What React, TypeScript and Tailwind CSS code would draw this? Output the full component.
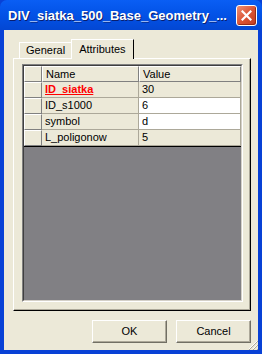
import React from 'react';

const rows = [
  { name: 'ID_siatka', value: '30', key: true, white: false },
  { name: 'ID_s1000', value: '6', key: false, white: true },
  { name: 'symbol', value: 'd', key: false, white: true },
  { name: 'L_poligonow', value: '5', key: false, white: false },
];

const font = "font-['Liberation_Sans',Arial,sans-serif]";

const CloseButton = () => (
  <div className="w-[21px] h-[21px] rounded-[3px] border border-white bg-gradient-to-br from-[#ec8f74] via-[#dc5535] to-[#c23c20] flex items-center justify-center shadow-[inset_-1px_-1px_0_#9a2c16]">
    <svg width="11" height="11" viewBox="0 0 11 11">
      <path d="M1.5 1.5 L9.5 9.5 M9.5 1.5 L1.5 9.5" stroke="white" strokeWidth="2.2" strokeLinecap="square" />
    </svg>
  </div>
);

const Grip = () => (
  <svg width="11" height="11" viewBox="0 0 11 11" className="absolute right-0 bottom-0">
    <path d="M10 2 L2 10 M10 6 L6 10 M10 10 L10 10" stroke="#ffffff" strokeWidth="1" />
    <path d="M11 2 L2 11 M11 6 L6 11 M11 10 L10 11" stroke="#aca899" strokeWidth="1" />
  </svg>
);

const ClassicButton = ({ label }: { label: string }) => (
  <button className="w-[75px] h-[23px] border-t border-l border-white border-r border-b border-r-[#716f64] border-b-[#716f64] bg-[#ece9d8] text-[11px] text-black shadow-[inset_-1px_-1px_0_#aca899]">
    {label}
  </button>
);

export default function App() {
  return (
    <div className={`w-[262px] h-[354px] bg-[#0841d6] flex flex-col ${font}`}>
      {/* title bar */}
      <div className="h-[30px] shrink-0 rounded-t-[7px] bg-gradient-to-b from-[#0a5ef4] via-[#0352e6] to-[#0347d3] flex items-center justify-between pl-[8px] pr-[5px]">
        <span className="text-white font-bold text-[13px] leading-none [text-shadow:1px_1px_0_#0a1e6e]">
          DIV_siatka_500_Base_Geometry_...
        </span>
        <CloseButton />
      </div>

      {/* body */}
      <div className="relative flex-1 mx-[4px] mb-[4px] bg-[#ece9d8] flex flex-col pl-[9px] pr-[7px] pt-[9px] pb-[7px]">
        {/* tabs */}
        <div className="flex items-end h-[19px] pl-[6px]">
          <div className="h-[16px] px-[6px] flex items-center text-[11px] border-t border-l border-white bg-[#ece9d8]">
            General
          </div>
          <div className="relative z-10 h-[20px] -mb-px px-[7px] flex items-center text-[11px] border-t border-l border-white border-r border-r-black bg-[#ece9d8]">
            Attributes
          </div>
        </div>

        {/* tab panel */}
        <div className="flex-1 border-t border-l border-white border-r border-b border-r-black border-b-black">
          <div className="h-full border-r border-b border-[#aca899] pt-[5px] pl-[8px] pr-[6px] pb-[7px] flex flex-col">
            {/* grid */}
            <div className="flex-1 flex flex-col border-t border-l border-[#808080] border-r border-b border-r-white border-b-white">
              <div className="flex-1 flex flex-col border-t border-l border-[#404040] border-r border-b border-r-[#d4d0c8] border-b-[#d4d0c8] text-[11px]">
                {/* header */}
                <div className="flex h-[16px]">
                  <div className="w-[18px] border-t border-l border-white border-r border-b border-r-[#808080] border-b-[#808080] bg-[#ece9d8]" />
                  <div className="w-[97px] border-t border-l border-white border-r border-b border-r-[#808080] border-b-[#808080] bg-[#ece9d8] pl-[3px] flex items-center">
                    Name
                  </div>
                  <div className="flex-1 border-t border-l border-white border-r border-b border-r-[#808080] border-b-[#808080] bg-[#ece9d8] pl-[3px] flex items-center">
                    Value
                  </div>
                </div>
                {rows.map((r) => (
                  <div key={r.name} className="flex h-[16px]">
                    <div className="w-[18px] border-t border-l border-white border-r border-b border-r-[#808080] border-b-[#808080] bg-[#ece9d8]" />
                    <div
                      className={`w-[97px] border-r border-b border-[#aca899] bg-[#ece9d8] pl-[3px] flex items-center ${
                        r.key ? 'text-[#ff0000] font-bold underline' : 'text-black'
                      }`}
                    >
                      {r.name}
                    </div>
                    <div
                      className={`flex-1 border-r border-b border-[#aca899] pl-[3px] flex items-center ${
                        r.white ? 'bg-white' : 'bg-[#ece9d8]'
                      }`}
                    >
                      {r.value}
                    </div>
                  </div>
                ))}
                <div className="h-[1px] bg-black" />
                <div className="flex-1 bg-[#818084]" />
              </div>
            </div>
          </div>
        </div>

        {/* buttons */}
        <div className="flex justify-end gap-[9px] mt-[9px]">
          <ClassicButton label="OK" />
          <ClassicButton label="Cancel" />
        </div>

        <Grip />
      </div>
    </div>
  );
}
